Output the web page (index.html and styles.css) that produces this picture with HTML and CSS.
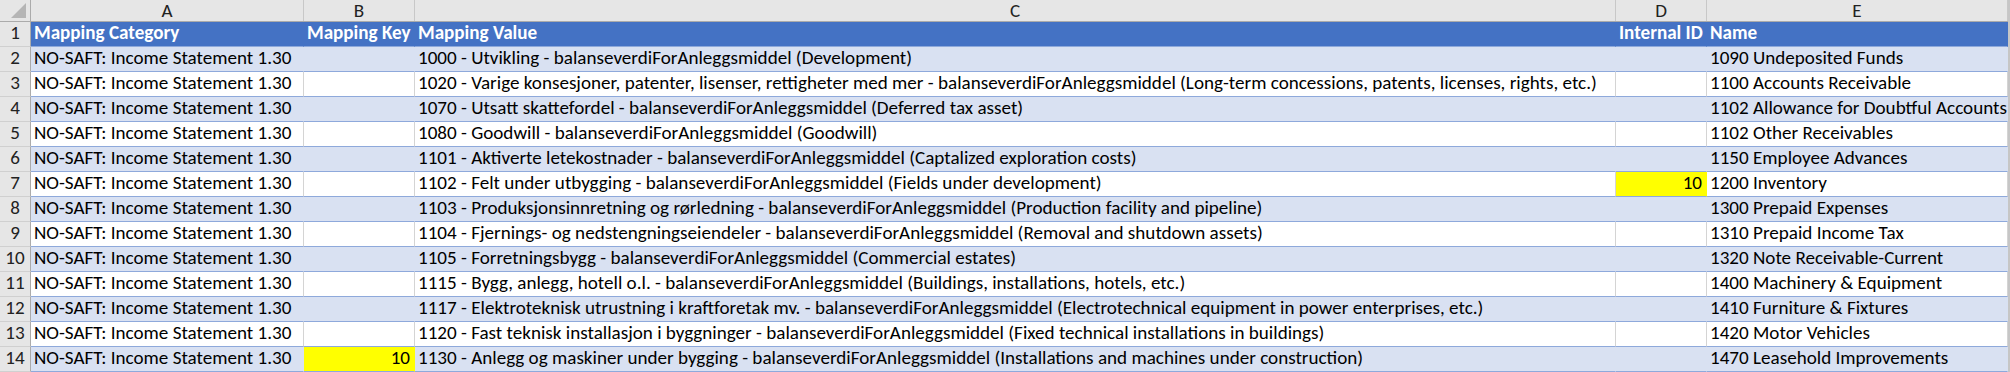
FILE: index.html
```html
<!DOCTYPE html>
<html>
<head>
<meta charset="utf-8">
<link rel="stylesheet" href="styles.css">
</head>
<body>
<div class="sheet">
  <div class="row colhdr">
    <div class="corner"><span class="tri"></span></div>
    <div class="ch">A</div>
    <div class="ch">B</div>
    <div class="ch">C</div>
    <div class="ch">D</div>
    <div class="ch">E</div>
  </div>
  <div class="row thead">
    <div class="rh">1</div>
    <div class="c">Mapping Category</div>
    <div class="c">Mapping Key</div>
    <div class="c">Mapping Value</div>
    <div class="c">Internal ID</div>
    <div class="c">Name</div>
  </div>
  <div class="row band">
    <div class="rh">2</div>
    <div class="c">NO-SAFT: Income Statement 1.30</div>
    <div class="c"></div>
    <div class="c">1000 - Utvikling - balanseverdiForAnleggsmiddel (Development)</div>
    <div class="c"></div>
    <div class="c">1090 Undeposited Funds</div>
  </div>
  <div class="row plain">
    <div class="rh">3</div>
    <div class="c">NO-SAFT: Income Statement 1.30</div>
    <div class="c"></div>
    <div class="c">1020 - Varige konsesjoner, patenter, lisenser, rettigheter med mer - balanseverdiForAnleggsmiddel (Long-term concessions, patents, licenses, rights, etc.)</div>
    <div class="c"></div>
    <div class="c">1100 Accounts Receivable</div>
  </div>
  <div class="row band">
    <div class="rh">4</div>
    <div class="c">NO-SAFT: Income Statement 1.30</div>
    <div class="c"></div>
    <div class="c">1070 - Utsatt skattefordel - balanseverdiForAnleggsmiddel (Deferred tax asset)</div>
    <div class="c"></div>
    <div class="c">1102 Allowance for Doubtful Accounts</div>
  </div>
  <div class="row plain">
    <div class="rh">5</div>
    <div class="c">NO-SAFT: Income Statement 1.30</div>
    <div class="c"></div>
    <div class="c">1080 - Goodwill - balanseverdiForAnleggsmiddel (Goodwill)</div>
    <div class="c"></div>
    <div class="c">1102 Other Receivables</div>
  </div>
  <div class="row band">
    <div class="rh">6</div>
    <div class="c">NO-SAFT: Income Statement 1.30</div>
    <div class="c"></div>
    <div class="c">1101 - Aktiverte letekostnader - balanseverdiForAnleggsmiddel (Captalized exploration costs)</div>
    <div class="c"></div>
    <div class="c">1150 Employee Advances</div>
  </div>
  <div class="row plain">
    <div class="rh">7</div>
    <div class="c">NO-SAFT: Income Statement 1.30</div>
    <div class="c"></div>
    <div class="c">1102 - Felt under utbygging - balanseverdiForAnleggsmiddel (Fields under development)</div>
    <div class="c num hl">10</div>
    <div class="c">1200 Inventory</div>
  </div>
  <div class="row band">
    <div class="rh">8</div>
    <div class="c">NO-SAFT: Income Statement 1.30</div>
    <div class="c"></div>
    <div class="c">1103 - Produksjonsinnretning og rørledning - balanseverdiForAnleggsmiddel (Production facility and pipeline)</div>
    <div class="c"></div>
    <div class="c">1300 Prepaid Expenses</div>
  </div>
  <div class="row plain">
    <div class="rh">9</div>
    <div class="c">NO-SAFT: Income Statement 1.30</div>
    <div class="c"></div>
    <div class="c">1104 - Fjernings- og nedstengningseiendeler - balanseverdiForAnleggsmiddel (Removal and shutdown assets)</div>
    <div class="c"></div>
    <div class="c">1310 Prepaid Income Tax</div>
  </div>
  <div class="row band">
    <div class="rh">10</div>
    <div class="c">NO-SAFT: Income Statement 1.30</div>
    <div class="c"></div>
    <div class="c">1105 - Forretningsbygg - balanseverdiForAnleggsmiddel (Commercial estates)</div>
    <div class="c"></div>
    <div class="c">1320 Note Receivable-Current</div>
  </div>
  <div class="row plain">
    <div class="rh">11</div>
    <div class="c">NO-SAFT: Income Statement 1.30</div>
    <div class="c"></div>
    <div class="c">1115 - Bygg, anlegg, hotell o.l. - balanseverdiForAnleggsmiddel (Buildings, installations, hotels, etc.)</div>
    <div class="c"></div>
    <div class="c">1400 Machinery &amp; Equipment</div>
  </div>
  <div class="row band">
    <div class="rh">12</div>
    <div class="c">NO-SAFT: Income Statement 1.30</div>
    <div class="c"></div>
    <div class="c">1117 - Elektroteknisk utrustning i kraftforetak mv. - balanseverdiForAnleggsmiddel (Electrotechnical equipment in power enterprises, etc.)</div>
    <div class="c"></div>
    <div class="c">1410 Furniture &amp; Fixtures</div>
  </div>
  <div class="row plain">
    <div class="rh">13</div>
    <div class="c">NO-SAFT: Income Statement 1.30</div>
    <div class="c"></div>
    <div class="c">1120 - Fast teknisk installasjon i byggninger - balanseverdiForAnleggsmiddel (Fixed technical installations in buildings)</div>
    <div class="c"></div>
    <div class="c">1420 Motor Vehicles</div>
  </div>
  <div class="row band">
    <div class="rh">14</div>
    <div class="c">NO-SAFT: Income Statement 1.30</div>
    <div class="c num hl">10</div>
    <div class="c">1130 - Anlegg og maskiner under bygging - balanseverdiForAnleggsmiddel (Installations and machines under construction)</div>
    <div class="c"></div>
    <div class="c">1470 Leasehold Improvements</div>
  </div>
</div>
</body>
</html>
```

FILE: styles.css
```css
html, body {
  margin: 0;
  padding: 0;
  background: #c6c6c6;
}
body {
  width: 2010px;
  height: 372px;
  overflow: hidden;
  font-family: Carlito, Calibri, Lato, "Liberation Sans", sans-serif;
  font-size: 19.1px;
  color: #000;
}
.sheet {
  width: 2008px;
  background: #fff;
}
.row {
  display: grid;
  grid-template-columns: 31px 273px 111px 1201px 91px 301px;
  height: 25px;
}
.colhdr {
  height: 22px;
  background: #e6e6e6;
  border-bottom: 1px solid #ababab;
  box-sizing: border-box;
}
.corner {
  position: relative;
  border-right: 1px solid #ababab;
}
.tri {
  position: absolute;
  right: 4px;
  bottom: 3px;
  width: 0;
  height: 0;
  border-left: 15px solid transparent;
  border-bottom: 15px solid #b5b5b5;
}
.ch {
  border-right: 1px solid #c8c8c8;
  text-align: center;
  line-height: 21px;
  color: #222;
}
.rh {
  background: #e6e6e6;
  border-right: 1px solid #ababab;
  border-bottom: 1px solid #d0d0d0;
  text-align: center;
  line-height: 21px;
  color: #222;
}
.c {
  padding: 0 0 0 3px;
  line-height: 21px;
  white-space: nowrap;
  border-bottom: 1px solid #8ea9db;
  border-right: 1px solid transparent;
}
.thead .c {
  background: #4472c4;
  color: #fff;
  font-weight: bold;
}
.band .c {
  background: #d9e1f2;
}
.plain .c {
  background: #fff;
  border-right-color: #d4d4d4;
}
.c.num {
  text-align: right;
  padding: 0 4px 0 0;
}
.row .c.hl {
  background: #ffff00;
  border-right-color: #ffff00;
}
```
